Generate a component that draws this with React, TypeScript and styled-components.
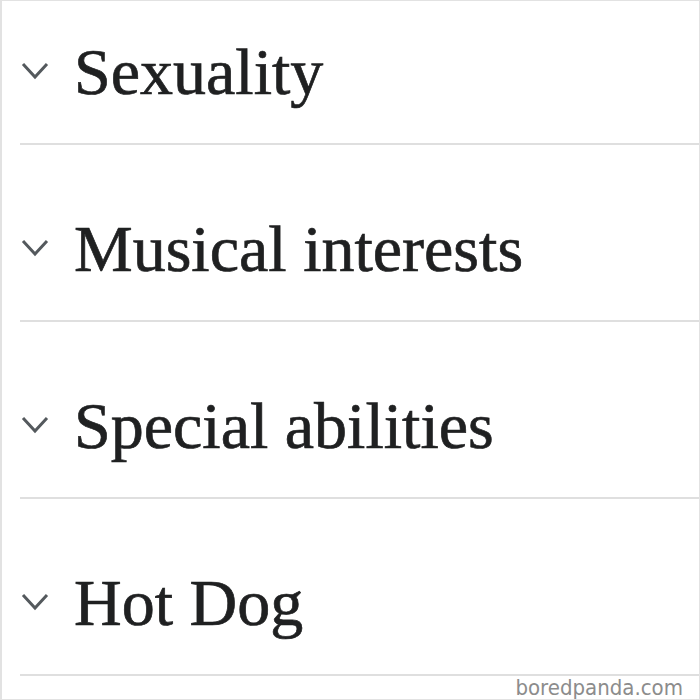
import { createGlobalStyle, styled } from 'styled-components';

const GlobalStyle = createGlobalStyle`
  html, body {
    margin: 0;
    padding: 0;
    background: #fff;
  }
`;

const sections = ['Sexuality', 'Musical interests', 'Special abilities', 'Hot Dog'];

function Chevron() {
  return (
    <ChevronIcon width="28" height="20" viewBox="0 0 28 20" aria-hidden="true">
      <path d="M2 3 L14 16 L26 3" fill="none" stroke="#54595d" strokeWidth="3" />
    </ChevronIcon>
  );
}

export default function App() {
  return (
    <>
      <GlobalStyle />
      <Page>
        <List>
          {sections.map((title) => (
            <Section key={title}>
              <Chevron />
              <Heading>{title}</Heading>
            </Section>
          ))}
        </List>
        <Watermark>boredpanda.com</Watermark>
      </Page>
    </>
  );
}

const Page = styled.div`
  position: relative;
  box-sizing: border-box;
  width: 700px;
  height: 700px;
  overflow: hidden;
  border: 1px solid #e2e2e2;
  border-left-width: 2px;
  background: #fff;
`;

const List = styled.div`
  display: flex;
  flex-direction: column;
  margin-left: 18px;
`;

const Section = styled.div`
  display: flex;
  align-items: center;
  gap: 25px;
  padding: 68px 0 35px 1px;
  border-bottom: 2px solid #dfdfdf;

  &:first-child {
    padding-top: 35px;
  }
`;

const ChevronIcon = styled.svg`
  flex: none;
  display: block;
  margin-top: -2px;
`;

const Heading = styled.h2`
  margin: 0;
  font-family: 'Liberation Serif', 'Times New Roman', serif;
  font-weight: normal;
  font-size: 66px;
  line-height: 72px;
  color: #1f2021;
  -webkit-text-stroke: 0.7px #1f2021;
`;

const Watermark = styled.div`
  position: absolute;
  right: 16px;
  bottom: -1px;
  font-family: 'DejaVu Sans Condensed', 'DejaVu Sans', sans-serif;
  font-size: 22px;
  color: #8c8c8c;
`;
